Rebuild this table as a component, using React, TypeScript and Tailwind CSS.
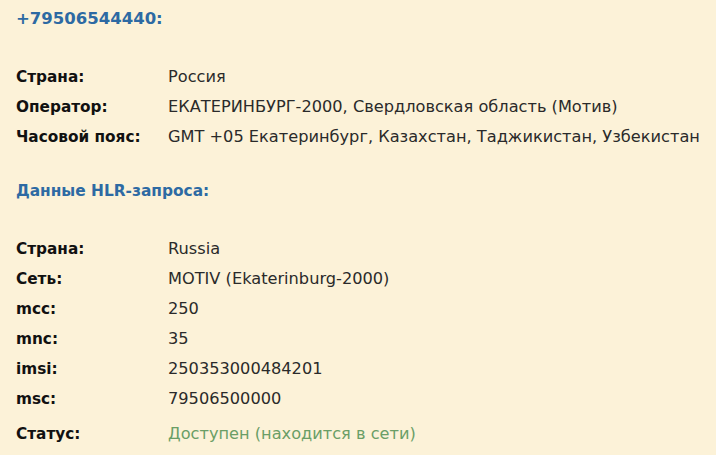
import React from "react";

const font = { fontFamily: '"DejaVu Sans", sans-serif' };

function Row({ label, value, valueClass = "text-[#2a2a2a]" }: { label: string; value: string; valueClass?: string }) {
  return (
    <div className="flex h-[30px] items-center">
      <div className="w-[152px] shrink-0 font-bold text-[15.3px] text-[#111]">{label}</div>
      <div className={`text-[16.2px] ${valueClass}`}>{value}</div>
    </div>
  );
}

export default function App() {
  return (
    <div className="w-[716px] h-[455px] bg-[#fcf2d8] pl-4 overflow-hidden text-[15px]" style={font}>
      <div className="h-[38px] flex items-center font-bold text-[16.5px] text-[#2d6aa3]">+79506544440:</div>
      <div className="pt-[24px]">
        <Row label="Страна:" value="Россия" />
        <Row label="Оператор:" value="ЕКАТЕРИНБУРГ-2000, Свердловская область (Мотив)" />
        <Row label="Часовой пояс:" value="GMT +05 Екатеринбург, Казахстан, Таджикистан, Узбекистан" />
      </div>
      <div className="mt-[25px] h-[30px] flex items-center font-bold text-[15.4px] text-[#2d6aa3]">Данные HLR-запроса:</div>
      <div className="pt-[27px]">
        <Row label="Страна:" value="Russia" />
        <Row label="Сеть:" value="MOTIV (Ekaterinburg-2000)" />
        <Row label="mcc:" value="250" />
        <Row label="mnc:" value="35" />
        <Row label="imsi:" value="250353000484201" />
        <Row label="msc:" value="79506500000" />
        <div className="mt-[5px]">
          <Row label="Статус:" value="Доступен (находится в сети)" valueClass="text-[#6a9e66]" />
        </div>
      </div>
    </div>
  );
}
